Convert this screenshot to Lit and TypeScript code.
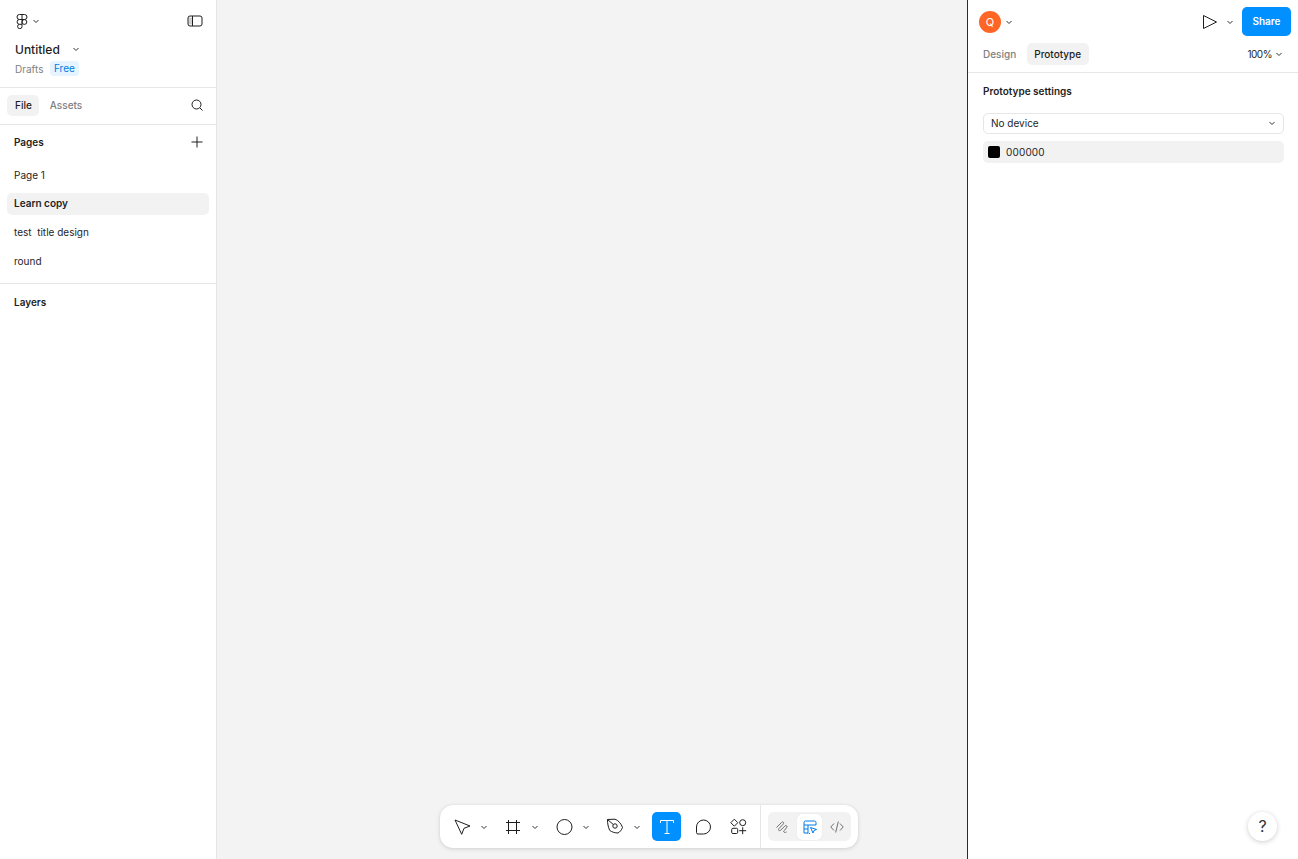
import { LitElement, html, css, svg } from "lit";
import { customElement } from "lit/decorators.js";

const chevron = html`<svg class="chev" width="8" height="8" viewBox="0 0 8 8" fill="none" stroke="#333" stroke-width="1"><path d="M1.5 3l2.5 2.5L6.5 3" /></svg>`;

const icon = (size: number, body: unknown, stroke = "#1e1e1e") =>
  html`<svg width=${size} height=${size} viewBox="0 0 ${size} ${size}" fill="none" stroke=${stroke} stroke-width="1">${body}</svg>`;

@customElement("app-root")
export class AppRoot extends LitElement {
  static styles = css`
    :host {
      display: flex;
      width: 1298px;
      height: 859px;
      overflow: hidden;
      font-family: Inter, "Liberation Sans", sans-serif;
      font-size: 10px;
      color: #1e1e1e;
      background: #fff;
    }

    svg {
      display: block;
      flex: none;
    }

    .left {
      flex: none;
      width: 216px;
      border-right: 1px solid #e6e6e6;
    }

    .file-head {
      height: 88px;
      box-sizing: border-box;
      padding: 12px 13px 0 14px;
      border-bottom: 1px solid #e6e6e6;
    }

    .logo-row {
      display: flex;
      align-items: center;
      height: 18px;
      gap: 2px;
    }

    .logo-row .panel {
      margin-left: auto;
    }

    .title-row {
      display: flex;
      align-items: center;
      gap: 12px;
      margin-top: 10px;
      height: 18px;
      font-size: 12px;
      font-weight: 500;
      padding-left: 1px;
    }

    .meta-row {
      display: flex;
      align-items: center;
      margin-top: 3px;
      height: 15px;
      padding-left: 1px;
      color: #808080;
    }

    .free {
      margin-left: 7px;
      padding: 0 4px 0 3.5px;
      height: 15px;
      line-height: 15px;
      border-radius: 4px;
      background: #e5f4ff;
      color: #007be5;
    }

    .tab-row {
      display: flex;
      align-items: center;
      height: 34px;
      padding: 0 13px 2px 7px;
      border-bottom: 1px solid #e6e6e6;
    }

    .tab {
      height: 21px;
      line-height: 21px;
      padding: 0 7px 0 8px;
      border-radius: 5px;
      font-weight: 500;
      color: #808080;
    }

    .tab.on {
      background: #f2f2f2;
      color: #1e1e1e;
    }

    .tab-row .tab + .tab {
      margin-left: 3px;
    }

    .tab-row svg {
      margin-left: auto;
    }

    .section-head {
      display: flex;
      align-items: center;
      justify-content: space-between;
      height: 34px;
      padding: 0 13px 1px 14px;
      font-weight: 600;
    }

    .pages {
      display: flex;
      flex-direction: column;
      gap: 7px;
      padding: 4px 7px 10px;
      border-bottom: 1px solid #e6e6e6;
    }

    .page {
      height: 22px;
      line-height: 21px;
      padding: 0 7px;
      border-radius: 5px;
    }

    .page:first-child {
      line-height: 23px;
    }

    .page.on {
      background: #f2f2f2;
      font-weight: 600;
    }

    .layers {
      height: 35px;
    }

    .canvas {
      flex: 1;
      position: relative;
      background: #f3f3f3;
    }

    .toolbar {
      position: absolute;
      left: 223px;
      top: 805px;
      width: 418px;
      height: 43px;
      box-sizing: border-box;
      display: flex;
      align-items: center;
      background: #fff;
      border-radius: 13px;
      box-shadow: 0 1px 4px rgba(0, 0, 0, 0.14), 0 0 1px rgba(0, 0, 0, 0.1);
    }

    .tools {
      display: flex;
      align-items: center;
      flex: 1;
      height: 100%;
      padding-left: 12px;
    }

    .tool {
      display: flex;
      align-items: center;
      justify-content: center;
      width: 21px;
      height: 29px;
    }

    .tool + .chev {
      margin-left: 7px;
      margin-right: 15px;
    }

    .tool.blue {
      width: 29px;
      border-radius: 5px;
      background: #0090ff;
      margin-left: -4px;
    }

    .tool.bubble {
      width: 29px;
      margin-left: 7px;
    }

    .tool.shapes {
      width: 29px;
      margin-left: 7px;
    }

    .modes {
      flex: none;
      width: 98px;
      height: 100%;
      box-sizing: border-box;
      border-left: 1px solid #e6e6e6;
      display: flex;
      align-items: center;
      padding-left: 7px;
    }

    .mode-group {
      display: flex;
      align-items: center;
      height: 29px;
      width: 83px;
      border-radius: 6px;
      background: #f2f2f2;
    }

    .mode {
      display: flex;
      align-items: center;
      justify-content: center;
      width: 28px;
      height: 29px;
      border-radius: 5px;
    }

    .mode.on {
      background: #fff;
      box-shadow: 0 0 1px rgba(0, 0, 0, 0.15);
      width: 25px;
      height: 26px;
      margin: 0 1px;
    }

    .right {
      flex: none;
      width: 331px;
      box-sizing: border-box;
      border-left: 1px solid #2c2c2c;
      position: relative;
    }

    .top-row {
      display: flex;
      align-items: center;
      height: 29px;
      padding: 7px 7px 0 11px;
    }

    .avatar {
      width: 22px;
      height: 22px;
      border-radius: 50%;
      background: #ff6524;
      color: #fff;
      font-size: 11px;
      font-weight: 400;
      text-align: center;
      line-height: 22px;
      margin-right: 4px;
    }

    .play {
      margin-left: auto;
      margin-right: 8px;
    }

    .share {
      margin-left: 8px;
      width: 49px;
      height: 29px;
      line-height: 29px;
      text-align: center;
      border-radius: 5px;
      background: #0090ff;
      color: #fff;
      font-weight: 600;
    }

    .design-row {
      display: flex;
      align-items: center;
      height: 37px;
      padding: 0 15px 0 8px;
      box-sizing: border-box;
      border-bottom: 1px solid #e6e6e6;
    }

    .design-row .tab {
      height: 22px;
      line-height: 22px;
      padding: 0 7.5px 0 7px;
    }

    .design-row .tab + .tab {
      margin-left: 3.5px;
    }

    .zoom {
      margin-left: auto;
      display: flex;
      align-items: center;
      gap: 3px;
      letter-spacing: -0.5px;
    }

    .settings {
      padding: 0 14px 0 15px;
    }

    .settings h2 {
      margin: 0;
      height: 37px;
      line-height: 37px;
      font-size: 10px;
      font-weight: 600;
    }

    .select {
      display: flex;
      align-items: center;
      justify-content: space-between;
      height: 18px;
      margin-top: 3px;
      padding: 0 7px 1px;
      border: 1px solid #e6e6e6;
      border-radius: 5px;
    }

    .color {
      display: flex;
      align-items: center;
      gap: 6px;
      height: 22px;
      margin-top: 7px;
      padding: 0 5px;
      border-radius: 5px;
      background: #f2f2f2;
      letter-spacing: 0.15px;
    }

    .swatch {
      width: 12px;
      height: 12px;
      border-radius: 2px;
      background: #000;
    }

    .help {
      position: absolute;
      right: 21px;
      bottom: 18px;
      width: 29px;
      height: 29px;
      border-radius: 50%;
      background: #fff;
      box-shadow: 0 1px 5px rgba(0, 0, 0, 0.2);
      text-align: center;
      line-height: 29px;
      font-size: 16px;
      color: #333;
    }
  `;

  render() {
    return html`
      <aside class="left">
        <div class="file-head">
          <div class="logo-row">
            ${icon(16, svg`<path d="M5.500 1.500h5a2.500 2.500 0 0 1 0 5h-5a2.500 2.500 0 0 1 0-5zM8 1.500v12a2.200 2.200 0 1 1-2.500-2.200H8M5.500 6.500a2.400 2.400 0 0 0 0 4.800M8 9a2.400 2.400 0 1 0 4.800 0A2.400 2.400 0 0 0 8 9z"/>`)}
            ${chevron}
            <svg class="panel" width="16" height="16" viewBox="0 0 16 16" fill="none" stroke="#1e1e1e" stroke-width="1">
              <path d="M1.500 4.500h3.500v7h-3.500z" fill="#d0d0d0" stroke="none" />
              <rect x="1" y="3" width="14" height="10" rx="2" />
              <path d="M5.500 3v10" />
            </svg>
          </div>
          <div class="title-row"><span>Untitled</span>${chevron}</div>
          <div class="meta-row"><span>Drafts</span><span class="free">Free</span></div>
        </div>
        <div class="tab-row">
          <div class="tab on">File</div>
          <div class="tab">Assets</div>
          ${icon(12, svg`<circle cx="5.500" cy="5.500" r="4.500"/><path d="M9 9l2.500 2.500"/>`)}
        </div>
        <div class="section-head">
          <span>Pages</span>
          ${icon(12, svg`<path d="M6 .5v11M.5 6h11"/>`)}
        </div>
        <div class="pages">
          <div class="page">Page 1</div>
          <div class="page on">Learn copy</div>
          <div class="page">test&nbsp; title design</div>
          <div class="page">round</div>
        </div>
        <div class="section-head layers"><span>Layers</span></div>
      </aside>

      <main class="canvas">
        <div class="toolbar">
          <div class="tools">
            <div class="tool">${icon(18, svg`<path d="M1 2L16 8L10 10.300L7.700 16.300Z" stroke-linejoin="round"/>`)}</div>
            ${chevron}
            <div class="tool">${icon(16, svg`<path d="M2.500 1v14M10.500 1v14M0 3.500h14M0 11.500h14"/>`)}</div>
            ${chevron}
            <div class="tool">${icon(18, svg`<circle cx="8.500" cy="9" r="7.500"/>`)}</div>
            ${chevron}
            <div class="tool">${icon(18, svg`<path d="M.5 1.500L8 1.200C11 2 14.500 6 15.500 9.500C14.500 12 13 14 11 15C8 15 5 14 2.800 12.500C1 9 .5 5 .5 1.500Z" stroke-linejoin="round"/><circle cx="8" cy="8" r="2.200"/><path d="M.5 1.500L6.300 6.500"/>`)}</div>
            ${chevron}
            <div class="tool blue">${icon(16, svg`<path d="M1.500 4V1.500h13V4M8 1.500v13M5.500 14.500h5"/>`, "#fff")}</div>
            <div class="tool bubble">${icon(16, svg`<path d="M8.500 1A7 7 0 0 1 8.500 15H3A1.500 1.500 0 0 1 1.500 13.500V8A7 7 0 0 1 8.500 1z"/>`)}</div>
            <div class="tool shapes">${icon(18, svg`<path d="M4.300 1.200L7.800 4.700L4.300 8.200L.8 4.700Z"/><circle cx="12.700" cy="4.700" r="3"/><rect x="1.700" y="10.300" width="6" height="5.200" rx="1.200"/><path d="M12.700 9.200v7M9.200 12.700h7"/>`)}</div>
          </div>
          <div class="modes">
            <div class="mode-group">
              <div class="mode">${icon(16, svg`<path d="M2.500 8.500l5-5c1.500-1.500 3 .2 1.600 1.700L5 9.500c-1.400 1.500.3 3 1.800 1.600l4-4c1.500-1.400 3 .2 1.700 1.700l-2.500 3c-1 1.400.5 2.200 2.500 1.200"/>`, "#707070")}</div>
              <div class="mode on">${icon(14, svg`<path d="M1 13V2.500A1.500 1.500 0 0 1 2.500 1h9A1.500 1.500 0 0 1 13 2.500V5H1M5 5v8.500M1 9h4M1 13h4M6 13.500h1"/><path d="M7.500 7.500l6 2-2.500 1-1 2.500z" fill="#fff"/>`, "#007be5")}</div>
              <div class="mode">${icon(14, svg`<path d="M4 3.500L.8 7 4 10.500M10 3.500L13.200 7 10 10.500M8.300 1.500L5.700 12.500"/>`, "#707070")}</div>
            </div>
          </div>
        </div>
      </main>

      <aside class="right">
        <div class="top-row">
          <div class="avatar">Q</div>
          ${chevron}
          <div class="play">${icon(16, svg`<path d="M1.500 1.500v13l13-6.500z" stroke-linejoin="round"/>`)}</div>
          ${chevron}
          <div class="share">Share</div>
        </div>
        <div class="design-row">
          <div class="tab">Design</div>
          <div class="tab on">Prototype</div>
          <div class="zoom"><span>100%</span>${chevron}</div>
        </div>
        <div class="settings">
          <h2>Prototype settings</h2>
          <div class="select"><span>No device</span>${chevron}</div>
          <div class="color"><span class="swatch"></span><span>000000</span></div>
        </div>
        <div class="help">?</div>
      </aside>
    `;
  }
}
